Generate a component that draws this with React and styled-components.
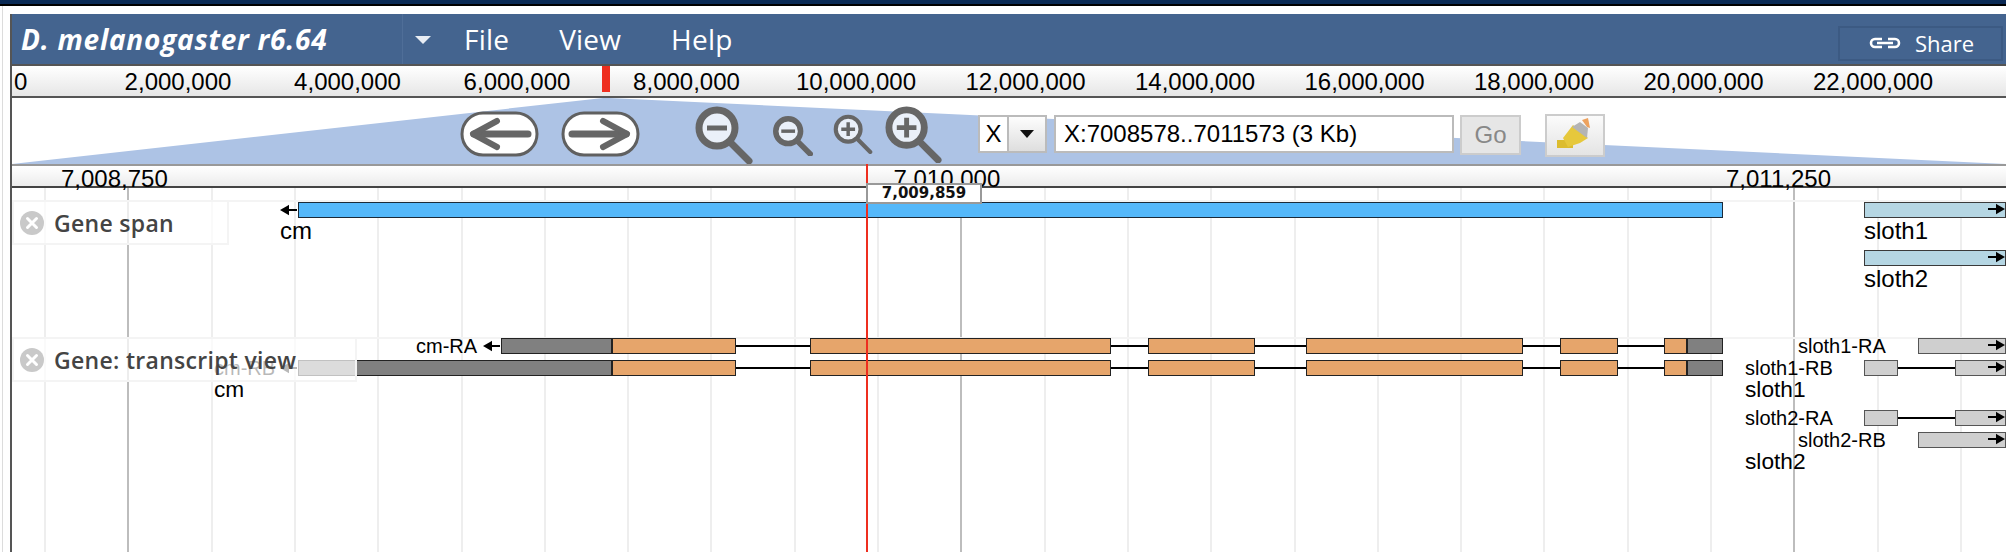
import styled, { createGlobalStyle } from "styled-components";

const GlobalStyle = createGlobalStyle`
  html, body {
    margin: 0;
    height: 100%;
    overflow: hidden;
    background: #ffffff;
  }
  * {
    box-sizing: border-box;
  }
`;

const overviewTicks = ["2,000,000", "4,000,000", "6,000,000", "8,000,000", "10,000,000", "12,000,000", "14,000,000", "16,000,000", "18,000,000", "20,000,000", "22,000,000"];
const detailTicks = ["7,008,750", "7,010,000", "7,011,250"];

// page x of every exon on cm, same for both transcripts
const cmExons = [
  [612, 736],
  [810, 1111],
  [1148, 1255],
  [1306, 1523],
  [1560, 1618],
  [1664, 1687],
];

function cmSegments(start) {
  const parts = [{ kind: "utr", w: 612 - start }];
  cmExons.forEach(([a, b], i) => {
    if (i > 0) parts.push({ kind: "intron", w: a - cmExons[i - 1][1] });
    parts.push({ kind: "cds", w: b - a });
  });
  parts.push({ kind: "utr", w: 36 });
  return parts;
}

const ORIGIN = 12;
const PAGE_RIGHT = 2006;

function ArrowIcon({ right }) {
  return (
    <ArrowSvg width="17" height="12" viewBox="0 0 17 12">
      {right ? (
        <path d="M0 6H12M9 2.5L15 6L9 9.5Z" stroke="#000" strokeWidth="2" fill="#000" />
      ) : (
        <path d="M17 6H5M8 2.5L2 6L8 9.5Z" stroke="#000" strokeWidth="2" fill="#000" />
      )}
    </ArrowSvg>
  );
}

function PillArrow({ flip }) {
  return (
    <svg width="79" height="46" viewBox="0 0 79 46">
      <rect x="2" y="2" width="75" height="42" rx="21" fill="#fff" stroke="#606060" strokeWidth="3" />
      <g transform={flip ? "translate(79 0) scale(-1 1)" : undefined} fill="none" stroke="#666" strokeLinecap="round" strokeLinejoin="round">
        <path d="M14 23H68" strokeWidth="7" />
        <path d="M37 10L13 23L37 36" strokeWidth="6" />
      </g>
    </svg>
  );
}

function Magnifier({ size, plus, stroke }) {
  return (
    <svg width={size} height={size} viewBox="0 0 58 58">
      <circle cx="22" cy="22" r="18" fill="#fff" fillOpacity="0.75" stroke="#666" strokeWidth={stroke} />
      <path d="M35 36L54 55" stroke="#666" strokeWidth={stroke} strokeLinecap="round" />
      <path d={plus ? "M12 22H32M22 12V32" : "M12 22H32"} stroke="#666" strokeWidth="5" />
    </svg>
  );
}

function CloseIcon() {
  return (
    <svg width="24" height="24" viewBox="0 0 24 24">
      <circle cx="12" cy="12" r="12" fill="#c9c9c9" />
      <path d="M7.5 7.5L16.5 16.5M16.5 7.5L7.5 16.5" stroke="#fff" strokeWidth="3" strokeLinecap="round" />
    </svg>
  );
}

// one gene glyph on the track canvas: optional name, strand arrow, bars, gene name under it
function Glyph({ x, top, name, nameWidth, leftArrow, parts, arrowEnd, below, compact }) {
  return (
    <GlyphBox $x={x - ORIGIN} $top={top}>
      <GlyphRow>
        {name && <Name $w={nameWidth}>{name}</Name>}
        {leftArrow && <ArrowIcon />}
        {parts.map((p, i) =>
          p.kind === "intron" ? (
            <Intron key={i} $w={p.w} />
          ) : (
            <Bar key={i} $w={p.w} $kind={p.kind}>
              {arrowEnd && i === parts.length - 1 && (
                <BarArrow>
                  <ArrowIcon right />
                </BarArrow>
              )}
            </Bar>
          )
        )}
      </GlyphRow>
      {below && <GeneName $compact={compact}>{below}</GeneName>}
    </GlyphBox>
  );
}

export default function App() {
  return (
    <>
      <GlobalStyle />
      <TopStrip />
      <Frame>
        <Browser>
          <MenuBar>
            <Dataset>D. melanogaster r6.64</Dataset>
            <MenuCaret />
            <MenuItem>File</MenuItem>
            <MenuItem>View</MenuItem>
            <MenuItem>Help</MenuItem>
            <ShareButton>
              <svg width="34" height="12" viewBox="0 0 34 12">
                <path d="M14 2H7a4 4 0 0 0 0 8h7M20 2h7a4 4 0 0 1 0 8h-7M9 6H25" fill="none" stroke="#fff" strokeWidth="2.6" />
              </svg>
              <span>Share</span>
            </ShareButton>
          </MenuBar>

          <OverviewRuler>
            <OverviewZero>0</OverviewZero>
            {overviewTicks.map((t) => (
              <OverviewTick key={t}>{t}</OverviewTick>
            ))}
            <OverviewMarker />
          </OverviewRuler>

          <ZoomBar>
            <ZoomRegion viewBox="0 0 1994 66" preserveAspectRatio="none">
              <polygon points="0,66 591,0 597,0 1994,66" fill="#adc3e5" />
            </ZoomRegion>
            <PanGroup>
              <PillArrow />
              <PillArrow flip />
            </PanGroup>
            <ZoomGroup>
              <NavButton $dy={1}><Magnifier size={58} stroke={7} /></NavButton>
              <NavButton $dy={4}><Magnifier size={40} stroke={8} /></NavButton>
              <NavButton $dy={-1}><Magnifier size={40} stroke={6} plus /></NavButton>
              <NavButton $tight><Magnifier size={57} stroke={7} plus /></NavButton>
            </ZoomGroup>
            <RefSelect>
              <span>X</span>
              <RefCaret><i /></RefCaret>
            </RefSelect>
            <LocationBox>X:7008578..7011573 (3 Kb)</LocationBox>
            <GoButton>Go</GoButton>
            <HighlightButton>
              <svg width="56" height="39" viewBox="0 0 56 39">
                <path d="M10 24H26V32H10Z" fill="#dcbc2e" />
                <path d="M16 22L26 9L41 22L33 27L21 31Z" fill="#e6c83c" />
                <path d="M25 11L33 6L41 12L40 22Z" fill="#b4b4b4" />
                <path d="M35 4L41 2L43 12L40 11Z" fill="#eda25e" />
              </svg>
            </HighlightButton>
          </ZoomBar>

          <DetailRuler>
            {detailTicks.map((t) => (
              <DetailTick key={t}>{t}</DetailTick>
            ))}
          </DetailRuler>

          <Tracks>
            <Track $height={137}>
              <TrackLabel $w={217}>
                <CloseIcon />
                Gene span
              </TrackLabel>
              <Glyph x={280} top={2} leftArrow parts={[{ kind: "gene", w: 1425 }]} below="cm" />
              <Glyph x={1864} top={2} parts={[{ kind: "sloth", w: PAGE_RIGHT - 1864 }]} arrowEnd below="sloth1" />
              <Glyph x={1864} top={50} parts={[{ kind: "sloth", w: PAGE_RIGHT - 1864 }]} arrowEnd below="sloth2" />
            </Track>

            <Track $fill>
              <Glyph x={416} top={1} name="cm-RA" nameWidth={67} leftArrow parts={cmSegments(501)} />
              <Glyph x={214} top={23} name="cm-RB" nameWidth={66} leftArrow parts={cmSegments(298)} below="cm" compact />

              <Glyph x={1798} top={1} name="sloth1-RA" nameWidth={120} parts={[{ kind: "plain", w: PAGE_RIGHT - 1918 }]} arrowEnd />
              <Glyph
                x={1745}
                top={23}
                name="sloth1-RB"
                nameWidth={119}
                parts={[{ kind: "plain", w: 34 }, { kind: "intron", w: 57 }, { kind: "plain", w: PAGE_RIGHT - 1955 }]}
                arrowEnd
                below="sloth1"
                compact
              />
              <Glyph
                x={1745}
                top={73}
                name="sloth2-RA"
                nameWidth={119}
                parts={[{ kind: "plain", w: 34 }, { kind: "intron", w: 57 }, { kind: "plain", w: PAGE_RIGHT - 1955 }]}
                arrowEnd
              />
              <Glyph x={1798} top={95} name="sloth2-RB" nameWidth={120} parts={[{ kind: "plain", w: PAGE_RIGHT - 1918 }]} arrowEnd />
              <Glyph x={1745} top={95} parts={[]} below="sloth2" compact />

              <TrackLabel $w={345}>
                <CloseIcon />
                Gene: transcript view
              </TrackLabel>
            </Track>
          </Tracks>

          <CursorLine />
          <CursorBadge>7,009,859</CursorBadge>
        </Browser>
      </Frame>
    </>
  );
}

const barColors = {
  gene: ["#54b8fa", "#1b2a38"],
  sloth: ["#b5d6e3", "#3a3a3a"],
  plain: ["#cfcfcf", "#555555"],
  utr: ["#808080", "#222222"],
  cds: ["#e6a56b", "#222222"],
};

const TopStrip = styled.div`
  height: 6px;
  background: #0a2a55;
  border-bottom: 2px solid #000;
`;

const Frame = styled.div`
  height: 546px;
  margin-left: 2px;
  padding: 8px 0 0 7px;
  border-left: 1px solid #dcdcdc;
`;

const Browser = styled.div`
  position: relative;
  height: 100%;
  border-left: 2px solid #555;
  display: flex;
  flex-direction: column;
  overflow: hidden;
`;

const MenuBar = styled.div`
  height: 50px;
  flex: none;
  display: flex;
  align-items: center;
  background: #44648f;
  color: #fff;
  font-family: "Open Sans", sans-serif;
`;

const Dataset = styled.div`
  width: 391px;
  height: 100%;
  padding-left: 9px;
  display: flex;
  align-items: center;
  border-right: 1px solid #4f6e98;
  font-size: 28px;
  font-weight: 700;
  font-style: italic;
  letter-spacing: 0.75px;
`;

const MenuCaret = styled.div`
  width: 0;
  height: 0;
  margin: 2px 33px 0 12px;
  border-left: 8px solid transparent;
  border-right: 8px solid transparent;
  border-top: 8px solid #e8edf4;
`;

const MenuItem = styled.div`
  margin-right: 50px;
  font-size: 28px;
  letter-spacing: 0.2px;
`;

const ShareButton = styled.div`
  margin: 8px 3px 0 auto;
  width: 165px;
  height: 35px;
  padding-left: 28px;
  display: flex;
  align-items: center;
  gap: 13px;
  background: #44648f;
  border: 2px solid #3c5a83;
  font-size: 22px;
`;

const OverviewRuler = styled.div`
  position: relative;
  height: 34px;
  flex: none;
  padding-top: 2px;
  display: flex;
  align-items: center;
  border-top: 2px solid #555;
  border-bottom: 2px solid #555;
  background: linear-gradient(#ffffff, #e6e6e6);
  font-family: "Liberation Sans", sans-serif;
  font-size: 24px;
  color: #000;
`;

const OverviewZero = styled.div`
  width: 81.25px;
  padding-left: 2px;
`;

const OverviewTick = styled.div`
  width: 169.5px;
  flex: none;
  text-align: center;
`;

const OverviewMarker = styled.div`
  position: absolute;
  left: 590px;
  top: 0;
  width: 8px;
  height: 26px;
  background: #ee2e1f;
`;

const ZoomBar = styled.div`
  position: relative;
  height: 66px;
  flex: none;
  padding: 6px 0 0 448px;
  display: flex;
  align-items: center;
  background: #fff;
  font-family: "Liberation Sans", sans-serif;
  font-size: 24px;
`;

const ZoomRegion = styled.svg`
  position: absolute;
  inset: 0;
  width: 100%;
  height: 100%;
`;

const PanGroup = styled.div`
  position: relative;
  display: flex;
  gap: 22px;
`;

const ZoomGroup = styled.div`
  position: relative;
  margin: 0 36px 0 55px;
  display: flex;
  align-items: center;
  gap: 20px;
`;

const NavButton = styled.div`
  display: flex;
  margin-top: ${(p) => p.$dy || 0}px;
  margin-left: ${(p) => (p.$tight ? "-8px" : 0)};
`;

const RefSelect = styled.div`
  position: relative;
  width: 69px;
  height: 38px;
  display: flex;
  border: 2px solid #bbb;
  background: #fff;
  span {
    width: 27px;
    text-align: center;
    line-height: 34px;
  }
`;

const RefCaret = styled.div`
  flex: 1;
  display: flex;
  align-items: center;
  justify-content: center;
  border-left: 2px solid #bbb;
  background: linear-gradient(#fdfdfd, #dedede);
  i {
    border-left: 7px solid transparent;
    border-right: 7px solid transparent;
    border-top: 8px solid #111;
  }
`;

const LocationBox = styled.div`
  position: relative;
  width: 400px;
  height: 38px;
  margin-left: 7px;
  padding-left: 8px;
  border: 2px solid #bbb;
  background: #fff;
  line-height: 34px;
  color: #000;
`;

const GoButton = styled.div`
  position: relative;
  width: 61px;
  height: 40px;
  margin: 1px 0 0 6px;
  text-align: center;
  line-height: 36px;
  border: 2px solid #ccc;
  background: #e6e6e6;
  color: #888;
`;

const HighlightButton = styled.div`
  position: relative;
  display: flex;
  width: 60px;
  height: 43px;
  margin: 2px 0 0 24px;
  border: 2px solid #ccc;
  background: linear-gradient(#fbfbfb, #e4e4e4);
`;

const DetailRuler = styled.div`
  position: relative;
  z-index: 1;
  height: 24px;
  flex: none;
  padding-left: 49px;
  display: flex;
  border-top: 2px solid #999;
  border-bottom: 2px solid #444;
  background: linear-gradient(#ffffff, #ececec);
  font-family: "Liberation Sans", sans-serif;
  font-size: 24px;
  line-height: 25px;
  color: #000;
`;

const DetailTick = styled.div`
  width: 832.5px;
  flex: none;
`;

const Tracks = styled.div`
  position: relative;
  flex: 1;
  padding-top: 12px;
  display: flex;
  flex-direction: column;
  background:
    repeating-linear-gradient(90deg, transparent 0 115px, #bdbdbd 115px 117px, transparent 117px 833px),
    repeating-linear-gradient(90deg, transparent 0 32px, #eeeeee 32px 34px, transparent 34px 83.3px);
`;

const Track = styled.div`
  position: relative;
  flex: ${(p) => (p.$fill ? 1 : "none")};
  height: ${(p) => (p.$height ? `${p.$height}px` : "auto")};
  box-shadow: inset 0 2px 0 #f4f4f4;
`;

const TrackLabel = styled.div`
  position: absolute;
  z-index: 2;
  left: 0;
  top: 0;
  width: ${(p) => p.$w}px;
  height: 45px;
  padding-left: 6px;
  display: flex;
  align-items: center;
  gap: 10px;
  border: 2px solid #f4f4f4;
  background: rgba(255, 255, 255, 0.72);
  font-family: "Open Sans", sans-serif;
  font-size: 23px;
  font-weight: 600;
  letter-spacing: 0.3px;
  color: #444;
  white-space: nowrap;
`;

const GlyphBox = styled.div`
  position: absolute;
  left: ${(p) => p.$x}px;
  top: ${(p) => p.$top}px;
  display: flex;
  flex-direction: column;
`;

const GlyphRow = styled.div`
  display: flex;
  align-items: center;
  height: 16px;
`;

const Bar = styled.div`
  position: relative;
  flex: none;
  width: ${(p) => p.$w}px;
  height: 16px;
  background: ${(p) => barColors[p.$kind][0]};
  border: 1.5px solid ${(p) => barColors[p.$kind][1]};
`;

const Intron = styled.div`
  flex: none;
  width: ${(p) => p.$w}px;
  height: 2px;
  background: #000;
`;

const BarArrow = styled.div`
  position: absolute;
  right: -1px;
  top: 0;
  display: flex;
`;

const ArrowSvg = styled.svg`
  flex: none;
  margin-right: 1px;
`;

const Name = styled.div`
  flex: none;
  width: ${(p) => (p.$w ? `${p.$w}px` : "auto")};
  padding-top: 1px;
  font-family: "Liberation Sans", sans-serif;
  font-size: 20px;
  line-height: 15px;
  color: #000;
  white-space: nowrap;
`;

const GeneName = styled.div`
  font-family: "Liberation Sans", sans-serif;
  font-size: ${(p) => (p.$compact ? "22.7px" : "24px")};
  line-height: 26px;
  color: #000;
  white-space: nowrap;
`;

const CursorLine = styled.div`
  position: absolute;
  z-index: 3;
  left: 854px;
  top: 150px;
  bottom: 0;
  width: 2px;
  background: #ee2e1f;
`;

const CursorBadge = styled.div`
  position: absolute;
  z-index: 4;
  left: 854px;
  top: 169px;
  width: 116px;
  height: 21px;
  border: 2px solid #999;
  background: #fff;
  text-align: center;
  font-family: "DejaVu Sans", sans-serif;
  font-size: 15px;
  font-weight: 700;
  line-height: 16px;
  color: #111;
`;
